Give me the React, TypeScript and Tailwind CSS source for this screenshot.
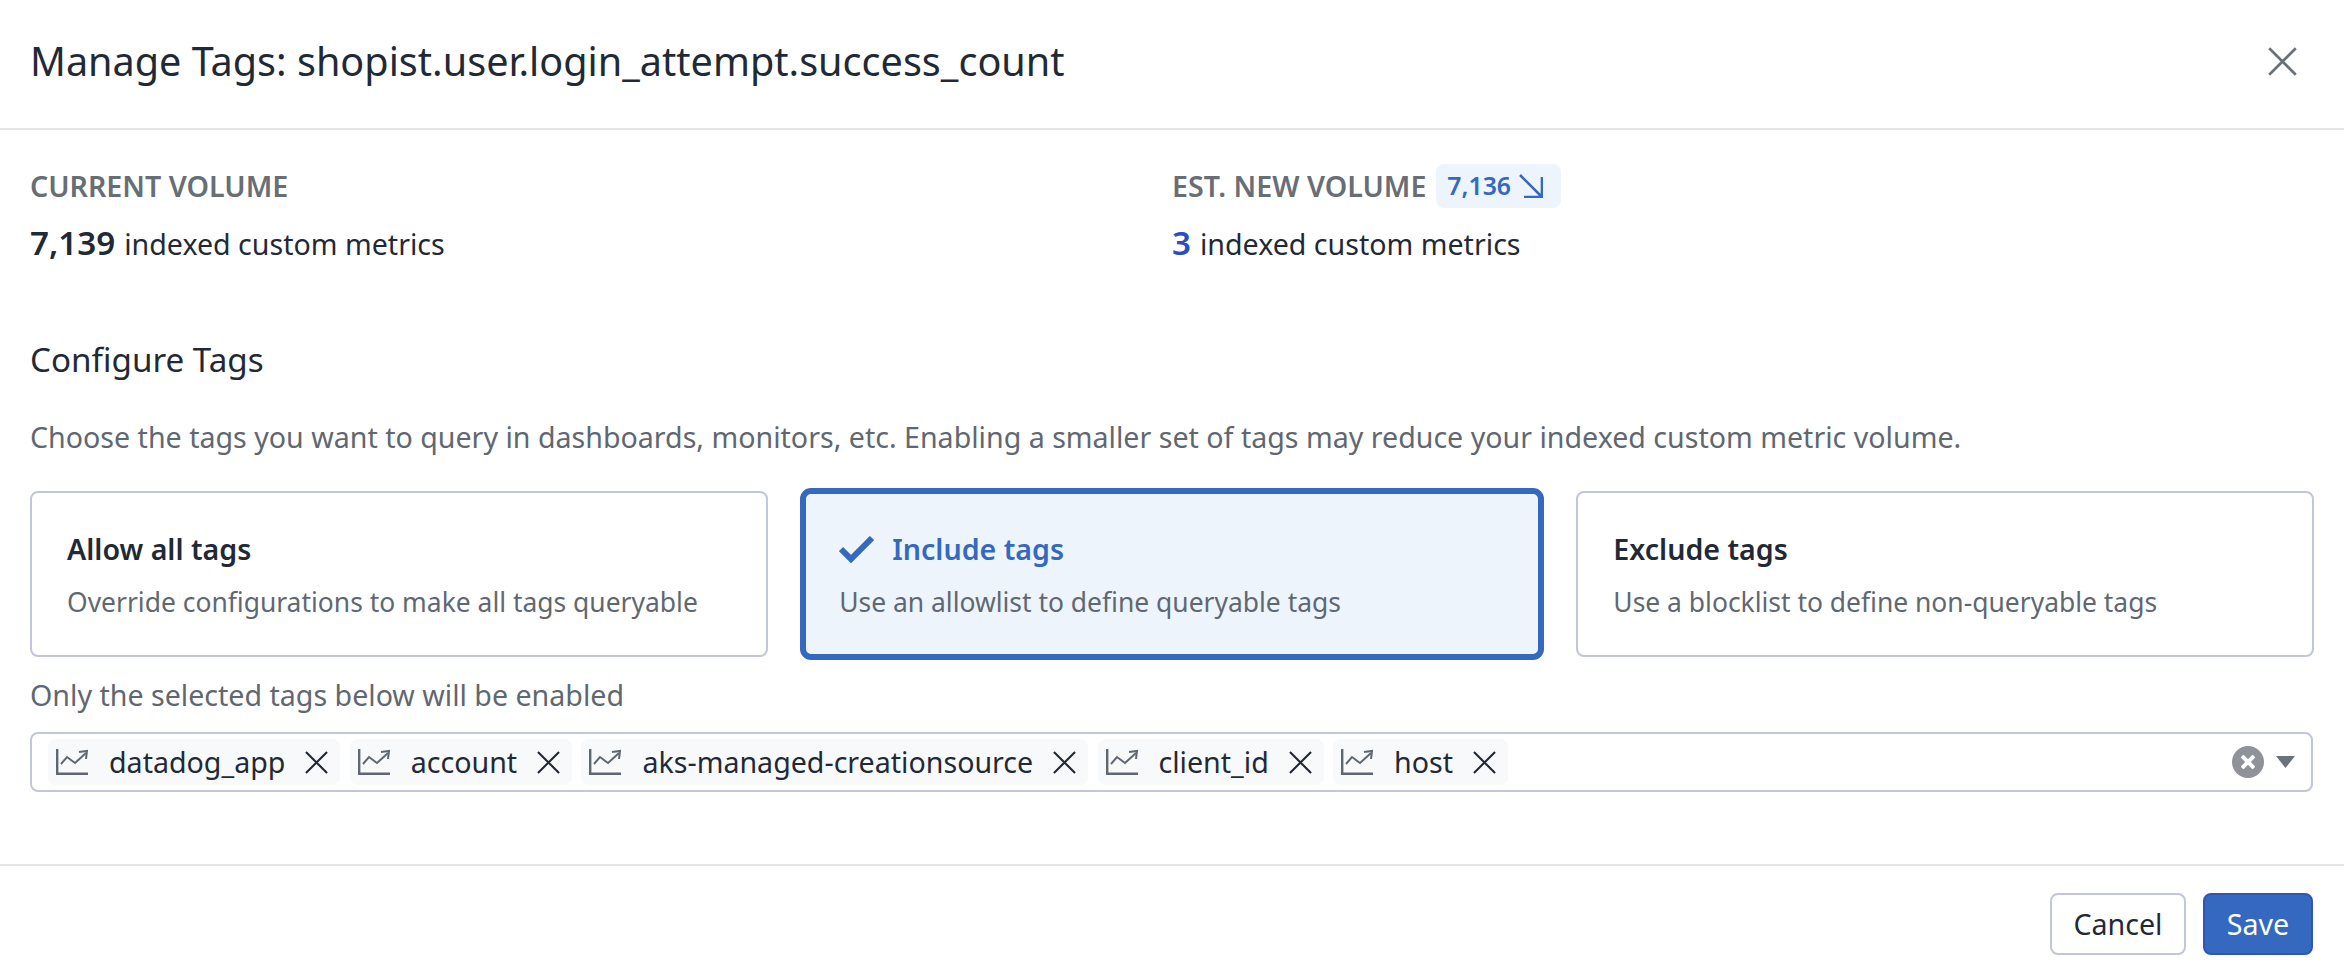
import { ReactNode } from "react";

const tags = ["datadog_app", "account", "aks-managed-creationsource", "client_id", "host"];

function ChartIcon() {
  return (
    <svg className="h-[26px] w-[32px] shrink-0 text-[#5f6872]" viewBox="0 0 32 26" fill="none" stroke="currentColor">
      <path d="M1.2 0v24.8H32" strokeWidth="2.4" />
      <path d="M5 15l6-7 8 6L30 4" strokeWidth="2" />
      <path d="M23 3l8-1-1 8" strokeWidth="2" />
    </svg>
  );
}

function CrossIcon({ className }: { className: string }) {
  return (
    <svg className={className} viewBox="0 0 24 24" fill="none" stroke="currentColor" strokeWidth="2.2">
      <path d="M1 1l22 22M23 1L1 23" />
    </svg>
  );
}

function Chip({ label }: { label: string }) {
  return (
    <div className="flex h-[46px] items-center rounded-lg bg-[#f8f9fb] pl-[8px] pr-[12px]">
      <ChartIcon />
      <span className="ml-[21px] text-[28.6px] leading-none text-[#1f2a36]">{label}</span>
      <CrossIcon className="ml-[20px] h-[23px] w-[23px] text-[#1f2a36]" />
    </div>
  );
}

function OptionCard({ title, desc, active }: { title: ReactNode; desc: string; active?: boolean }) {
  return (
    <div
      className={
        active
          ? "flex h-[166px] flex-col justify-center rounded-lg border-[3px] border-[#3469bf] bg-[#edf4fc] px-[33px] pt-[2px] shadow-[0_0_0_3px_#3469bf]"
          : "flex h-[166px] flex-col justify-center rounded-lg border-[2px] border-[#c3c5dc] bg-white px-[35px] pt-[2px]"
      }
    >
      <div className="text-[28.6px] font-semibold leading-[36px] text-[#1f2a36]">{title}</div>
      <div className="mt-[18px] text-[26.45px] leading-[34px] text-[#5f6872]">{desc}</div>
    </div>
  );
}

export default function App() {
  return (
    <div className="flex h-[974px] w-[2344px] flex-col bg-white font-['Noto_Sans',sans-serif] text-[#1f2a36]">
      <div className="flex h-[130px] shrink-0 items-center justify-between border-b-2 border-[#e2e5ea] pb-[6px] pl-[30px] pr-[47px]">
        <h1 className="mt-[2px] text-[39.6px] leading-none text-[#1f2a36]">Manage Tags: shopist.user.login_attempt.success_count</h1>
        <CrossIcon className="h-[29px] w-[29px] text-[#6b7178]" />
      </div>

      <div className="flex-1 px-[30px]">
        <div className="mt-[34px] grid grid-cols-[1142px_1fr]">
          <div>
            <div className="flex h-[44px] items-center text-[28.6px] font-semibold text-[#676e76]">CURRENT VOLUME</div>
            <div className="mt-[13px] flex items-baseline text-[28.6px] leading-[44px]">
              <span className="text-[33.2px] font-semibold">7,139</span>
              <span className="ml-[9px]">indexed custom metrics</span>
            </div>
          </div>
          <div>
            <div className="flex h-[44px] items-center">
              <span className="text-[28.6px] font-semibold text-[#676e76]">EST. NEW VOLUME</span>
              <span className="ml-[10px] flex h-[44px] items-center rounded-lg bg-[#edf4fc] pl-[11px] pr-[18px] text-[24.8px] font-semibold text-[#3469bf]">
                7,136
                <svg className="ml-[8px] h-[24px] w-[24px]" viewBox="0 0 24 24" fill="none" stroke="currentColor" strokeWidth="2.6">
                  <path d="M1 1l22 22M23 3v20H5" />
                </svg>
              </span>
            </div>
            <div className="mt-[13px] flex items-baseline text-[28.6px] leading-[44px]">
              <span className="text-[33.2px] font-semibold text-[#2a4fc0]">3</span>
              <span className="ml-[9px]">indexed custom metrics</span>
            </div>
          </div>
        </div>

        <h2 className="mt-[74px] text-[33.2px] leading-[40px]">Configure Tags</h2>
        <p className="mt-[39px] text-[28.6px] leading-[36px] text-[#5f6872]">
          Choose the tags you want to query in dashboards, monitors, etc. Enabling a smaller set of tags may reduce your indexed custom metric volume.
        </p>

        <div className="mt-[36px] grid grid-cols-3 gap-[35.5px]">
          <OptionCard title="Allow all tags" desc="Override configurations to make all tags queryable" />
          <OptionCard
            active
            title={
              <span className="flex items-center text-[#3469bf]">
                <svg className="mr-[18px] h-[27px] w-[35px]" viewBox="0 0 35 27" fill="none" stroke="currentColor" strokeWidth="6">
                  <path d="M2 13l10 10L33 2" />
                </svg>
                Include tags
              </span>
            }
            desc="Use an allowlist to define queryable tags"
          />
          <OptionCard title="Exclude tags" desc="Use a blocklist to define non-queryable tags" />
        </div>

        <p className="mt-[20px] text-[28.6px] leading-[36px] text-[#5f6872]">Only the selected tags below will be enabled</p>

        <div className="mr-[1px] mt-[19px] flex h-[60px] items-center gap-[9.3px] rounded-lg border-[2px] border-[#c3c5dc] pl-[16px] pr-[16px]">
          {tags.map((t) => (
            <Chip key={t} label={t} />
          ))}
          <div className="ml-auto flex items-center gap-[12px]">
            <div className="flex h-[32px] w-[32px] items-center justify-center rounded-full bg-[#8f9399]">
              <svg className="h-[14px] w-[14px]" viewBox="0 0 14 14" fill="none" stroke="white" strokeWidth="4">
                <path d="M1 1l12 12M13 1L1 13" />
              </svg>
            </div>
            <svg className="h-[12px] w-[19px]" viewBox="0 0 19 12" fill="#6b7178">
              <path d="M0 0h19l-9.5 12z" />
            </svg>
          </div>
        </div>
      </div>

      <div className="flex h-[110px] shrink-0 items-start justify-end gap-[17px] border-t-2 border-[#e2e5ea] pr-[31px] pt-[27px]">
        <button className="h-[62px] w-[136px] rounded-lg border-[2px] border-[#c3c5dc] bg-white text-[28.6px] text-[#1f2a36]">Cancel</button>
        <button className="h-[62px] w-[110px] rounded-lg border-[2px] border-[#2f55b8] bg-[#3469bf] text-[28.6px] text-white">Save</button>
      </div>
    </div>
  );
}
